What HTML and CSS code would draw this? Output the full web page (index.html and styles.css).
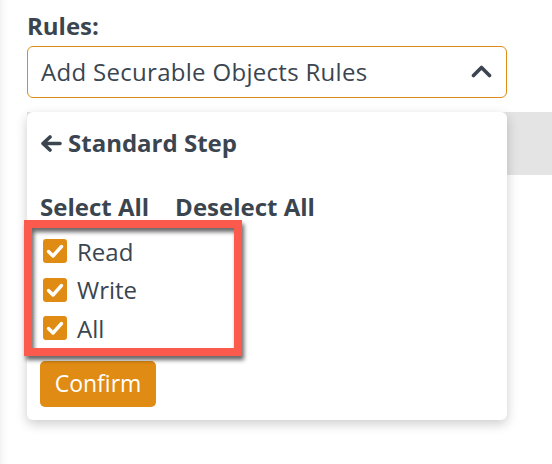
FILE: index.html
```html
<!DOCTYPE html>
<html lang="en">
<head>
<meta charset="utf-8">
<title>Rules</title>
<link rel="stylesheet" href="styles.css">
</head>
<body>
<div class="page">
  <div class="field-label">Rules:</div>
  <div class="select">
    <span class="select-value">Add Securable Objects Rules</span>
    <svg class="chevron" width="21" height="13" viewBox="0 0 21 13"><path d="M2.5 10.5 L10.5 2.5 L18.5 10.5" fill="none" stroke="#3b4550" stroke-width="3.6" stroke-linecap="round" stroke-linejoin="round"/></svg>
  </div>
  <div class="backdrop-bar"></div>

  <div class="menu">
    <div class="menu-header">
      <svg class="back-arrow" width="22" height="17" viewBox="0 0 22 17"><path d="M20 8.5 H3.5 M10 2 L3 8.5 L10 15" fill="none" stroke="#3b4550" stroke-width="3.6" stroke-linecap="round" stroke-linejoin="round"/></svg>
      <span>Standard Step</span>
    </div>
    <div class="bulk-actions">
      <span>Select All</span>
      <span>Deselect All</span>
    </div>
    <ul class="options">
      <li class="option"><span class="checkbox"><svg width="24" height="24" viewBox="0 0 24 24"><path d="M5.5 12.5 L10 17 L18.5 7.5" fill="none" stroke="#fff" stroke-width="3.4" stroke-linecap="round" stroke-linejoin="round"/></svg></span>Read</li>
      <li class="option"><span class="checkbox"><svg width="24" height="24" viewBox="0 0 24 24"><path d="M5.5 12.5 L10 17 L18.5 7.5" fill="none" stroke="#fff" stroke-width="3.4" stroke-linecap="round" stroke-linejoin="round"/></svg></span>Write</li>
      <li class="option"><span class="checkbox"><svg width="24" height="24" viewBox="0 0 24 24"><path d="M5.5 12.5 L10 17 L18.5 7.5" fill="none" stroke="#fff" stroke-width="3.4" stroke-linecap="round" stroke-linejoin="round"/></svg></span>All</li>
    </ul>
    <button class="confirm">Confirm</button>
  </div>

  <div class="highlight"></div>
</div>
</body>
</html>
```

FILE: styles.css
```css
html, body {
  margin: 0;
  padding: 0;
}
body {
  width: 552px;
  height: 464px;
  overflow: hidden;
  background: linear-gradient(to right, #f3f3f3 0, #fbfbfb 4px, #ffffff 9px);
  font-family: "Open Sans", "Lato", sans-serif;
  font-size: 24px;
  line-height: 29px;
  color: #3b4550;
}
.page {
  position: relative;
  padding: 11px 0 0 27px;
}
.field-label {
  font-weight: 700;
  margin-bottom: 6px;
}
.select {
  box-sizing: border-box;
  width: 480px;
  height: 52px;
  border: 1px solid #e08c14;
  border-radius: 6px;
  display: flex;
  align-items: center;
  justify-content: space-between;
  padding: 0 14px 2px 13px;
  background: #fff;
}
.select-value {
  letter-spacing: 0.3px;
}
.chevron {
  display: block;
}
.backdrop-bar {
  margin-top: 14px;
  height: 63px;
  background: #e4e4e4;
}
.menu {
  position: absolute;
  top: 112px;
  left: 27px;
  box-sizing: border-box;
  width: 480px;
  height: 308px;
  background: #fff;
  border-radius: 6px;
  box-shadow: 0 4px 12px rgba(0, 0, 0, 0.2);
  padding: 16px 13px 13px 13px;
}
.menu-header {
  display: flex;
  align-items: center;
  gap: 6px;
  font-weight: 700;
}
.back-arrow {
  display: block;
  margin-top: 2px;
}
.bulk-actions {
  margin-top: 35px;
  display: flex;
  gap: 26px;
  font-weight: 700;
}
.options {
  list-style: none;
  margin: 11px 0 0 0;
  padding: 0 0 0 3px;
}
.option {
  display: flex;
  align-items: center;
  height: 38.5px;
  gap: 10px;
}
.checkbox {
  width: 24px;
  height: 24px;
  border-radius: 3px;
  background: #e08c14;
  display: block;
  flex: none;
}
.checkbox svg {
  display: block;
}
.confirm {
  margin-top: 13px;
  width: 116px;
  height: 46px;
  border: none;
  border-radius: 5px;
  background: #e08c14;
  color: #fff;
  font-family: inherit;
  font-size: 23px;
  line-height: 29px;
  padding: 0;
}
.highlight {
  position: absolute;
  left: 24px;
  top: 220px;
  box-sizing: border-box;
  width: 218px;
  height: 136px;
  border: 8px solid #fd5a4e;
  filter: drop-shadow(2px 4px 2px rgba(0, 0, 0, 0.6));
}
```
